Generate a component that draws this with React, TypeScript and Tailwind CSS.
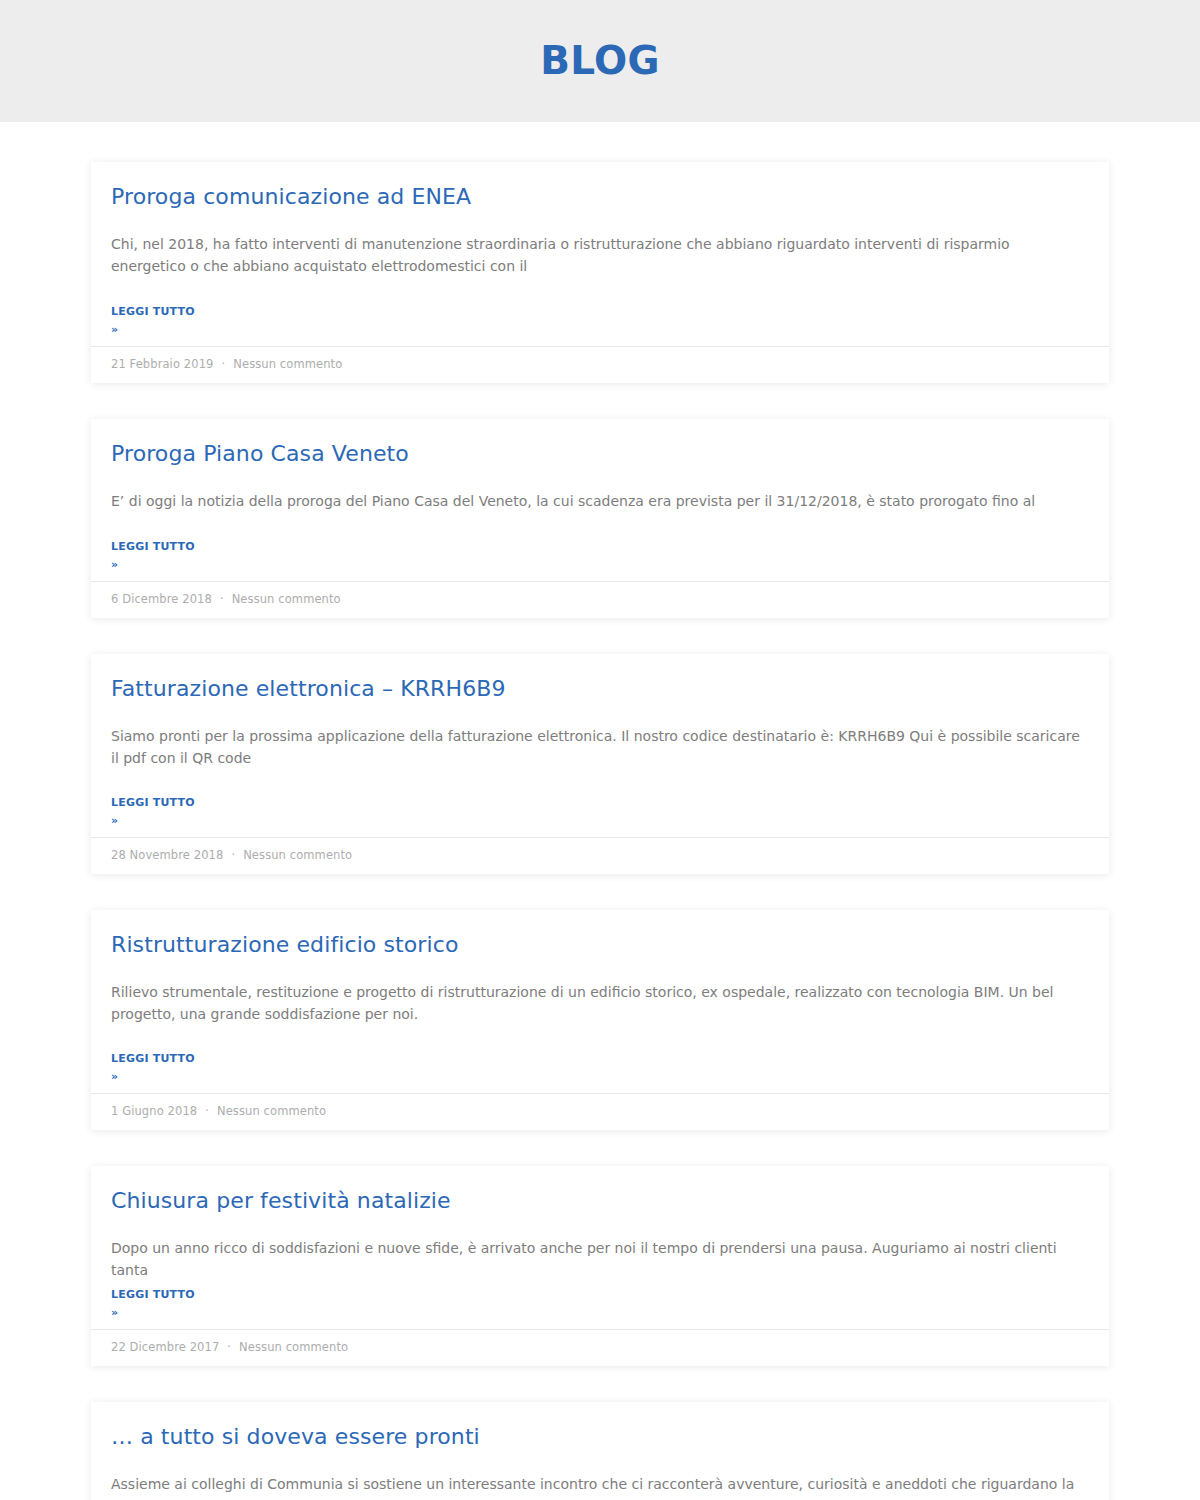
import React from 'react';

interface Post {
  title: string;
  excerpt: string;
  date: string;
  gapAfter: string;
}

const posts: Post[] = [
  {
    title: 'Proroga comunicazione ad ENEA',
    excerpt:
      'Chi, nel 2018, ha fatto interventi di manutenzione straordinaria o ristrutturazione che abbiano riguardato interventi di risparmio energetico o che abbiano acquistato elettrodomestici con il',
    date: '21 Febbraio 2019',
    gapAfter: 'mb-[26px]',
  },
  {
    title: 'Proroga Piano Casa Veneto',
    excerpt:
      'E’ di oggi la notizia della proroga del Piano Casa del Veneto, la cui scadenza era prevista per il 31/12/2018, è stato prorogato fino al',
    date: '6 Dicembre 2018',
    gapAfter: 'mb-[26px]',
  },
  {
    title: 'Fatturazione elettronica – KRRH6B9',
    excerpt:
      'Siamo pronti per la prossima applicazione della fatturazione elettronica. Il nostro codice destinatario è: KRRH6B9 Qui è possibile scaricare il pdf con il QR code',
    date: '28 Novembre 2018',
    gapAfter: 'mb-[25px]',
  },
  {
    title: 'Ristrutturazione edificio storico',
    excerpt:
      'Rilievo strumentale, restituzione e progetto di ristrutturazione di un edificio storico, ex ospedale, realizzato con tecnologia BIM. Un bel progetto, una grande soddisfazione per noi.',
    date: '1 Giugno 2018',
    gapAfter: 'mb-[25px]',
  },
  {
    title: 'Chiusura per festività natalizie',
    excerpt:
      'Dopo un anno ricco di soddisfazioni e nuove sfide, è arrivato anche per noi il tempo di prendersi una pausa. Auguriamo ai nostri clienti tanta',
    date: '22 Dicembre 2017',
    gapAfter: 'mb-[5px]',
  },
  {
    title: '… a tutto si doveva essere pronti',
    excerpt:
      'Assieme ai colleghi di Communia si sostiene un interessante incontro che ci racconterà avventure, curiosità e aneddoti che riguardano la storia della nostra professione',
    date: '15 Dicembre 2017',
    gapAfter: 'mb-[26px]',
  },
];

const font = "font-['DejaVu_Sans',sans-serif]";

function PostCard({ post }: { post: Post }) {
  return (
    <article className="bg-white shadow-[0_1px_8px_rgba(0,0,0,0.09)]">
      <div className="pl-5 pr-[23px] pt-5 pb-[7px]">
        <h2 className="text-[22px] leading-[30px] text-[#2b68b6] mb-[21px] tracking-[0.1px]">{post.title}</h2>
        <p className={`text-[14px] leading-[22px] text-[#7d7d7d] ${post.gapAfter}`}>{post.excerpt}</p>
        <a className="block text-[11px] leading-[18px] font-bold text-[#2b68b6] uppercase tracking-[0.2px]">
          Leggi tutto
          <br />»
        </a>
      </div>
      <div className="border-t border-[#e8e8e8] px-5 h-[37px] flex items-center text-[11.5px] text-[#adadad] tracking-[0.1px]">
        <span>{post.date}</span>
        <span className="mx-2">·</span>
        <span>Nessun commento</span>
      </div>
    </article>
  );
}

export default function App() {
  return (
    <div className={`min-h-screen bg-white ${font}`}>
      <header className="h-[122px] bg-[#ededed] flex items-center justify-center">
        <h1 className="text-[39px] font-bold text-[#2b68b6] tracking-[0.3px]">BLOG</h1>
      </header>
      <main className="w-[1018px] mx-auto pt-10 pb-10 flex flex-col gap-9">
        {posts.map((post) => (
          <PostCard key={post.title} post={post} />
        ))}
      </main>
    </div>
  );
}
